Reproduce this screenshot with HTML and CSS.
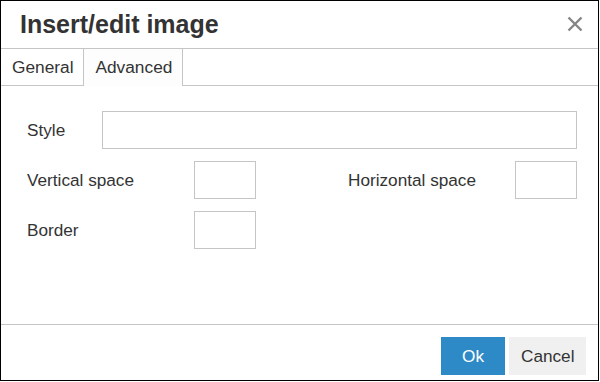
FILE: index.html
```html
<!DOCTYPE html>
<html>
<head>
<meta charset="utf-8">
<link rel="stylesheet" href="styles.css">
</head>
<body>
<div class="dialog">
  <div class="head">
    <div class="title">Insert/edit image</div>
    <button class="close" aria-label="Close">
      <svg width="16" height="16" viewBox="0 0 16 16"><path d="M1.5 1.5 L14.5 14.5 M14.5 1.5 L1.5 14.5" stroke="#858585" stroke-width="2.4" fill="none"/></svg>
    </button>
  </div>
  <div class="tabs">
    <div class="tab">General</div>
    <div class="tab active">Advanced</div>
  </div>
  <div class="body">
    <div class="row">
      <label class="lbl lbl-short">Style</label>
      <input class="field wide" type="text">
    </div>
    <div class="row">
      <label class="lbl lbl-long">Vertical space</label>
      <input class="field small" type="text">
      <label class="lbl lbl-long lbl-right">Horizontal space</label>
      <input class="field small" type="text">
    </div>
    <div class="row">
      <label class="lbl lbl-long">Border</label>
      <input class="field small" type="text">
    </div>
  </div>
  <div class="foot">
    <button class="btn primary">Ok</button>
    <button class="btn">Cancel</button>
  </div>
</div>
</body>
</html>
```
FILE: styles.css
```css
html, body {
  margin: 0;
  padding: 0;
  background: #fff;
}
body {
  font-family: "Liberation Sans", Arial, sans-serif;
  color: #333;
}
.dialog {
  width: 599px;
  height: 381px;
  box-sizing: border-box;
  border: 1px solid #000;
  display: flex;
  flex-direction: column;
  background: #fff;
}
.head {
  height: 47px;
  border-bottom: 1px solid #c5c5c5;
  display: flex;
  align-items: center;
  justify-content: space-between;
  padding: 0 15px 0 19px;
  flex: none;
}
.title {
  font-size: 25px;
  font-weight: bold;
  line-height: 1;
  color: #333;
}
.close {
  border: 0;
  background: none;
  padding: 0;
  width: 16px;
  height: 16px;
  display: flex;
  margin-top: -1px;
}
.tabs {
  height: 36px;
  border-bottom: 1px solid #c5c5c5;
  display: flex;
  flex: none;
}
.tab {
  height: 36px;
  line-height: 36px;
  padding: 0 10px 0 11px;
  font-size: 17.3px;
  border-right: 1px solid #c5c5c5;
  box-sizing: border-box;
  color: #333;
}
.tab.active {
  height: 37px;
  background: #fdfdfd;
  margin-bottom: -1px;
}
.body {
  flex: 1;
  padding: 25px 21px 0 26px;
  display: flex;
  flex-direction: column;
  gap: 12px;
}
.row {
  display: flex;
  align-items: center;
  height: 38px;
}
.lbl {
  font-size: 17.2px;
  color: #333;
  flex: none;
}
.lbl-short { width: 75px; }
.lbl-long { width: 167px; }
.lbl-right { margin-left: 92px; }
.field {
  height: 38px;
  box-sizing: border-box;
  border: 1px solid #c5c5c5;
  background: #fff;
  margin: 0;
  padding: 0 6px;
  font: inherit;
  outline: none;
}
.field.wide { flex: 1; }
.field.small { width: 62px; flex: none; }
.foot {
  height: 43px;
  flex: none;
  border-top: 1px solid #c5c5c5;
  display: flex;
  justify-content: flex-end;
  align-items: flex-start;
  gap: 4px;
  padding: 12px 12px 0 0;
  box-sizing: content-box;
}
.btn {
  height: 38px;
  border: 0;
  margin: 0;
  padding: 0 11.5px;
  font-family: "Liberation Sans", Arial, sans-serif;
  font-size: 17.2px;
  background: #f0f0f0;
  color: #333;
}
.btn.primary {
  background: #2d8ac7;
  color: #fff;
  padding: 0 21.5px;
}
```
